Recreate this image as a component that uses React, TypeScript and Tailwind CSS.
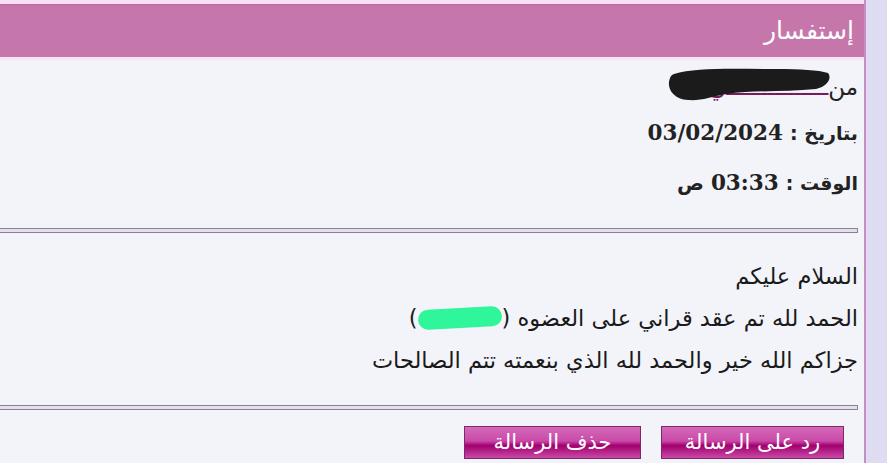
import React from 'react'

const arabic = { fontFamily: '"DejaVu Sans", "Noto Sans", sans-serif' }

const Rule: React.FC = () => (
  <div className="h-[5px] w-[858px] border-y border-r border-[#8a7f98] bg-[#e4e0ea]" />
)

const PinkButton: React.FC<{ label: string; width: string }> = ({ label, width }) => (
  <button
    className={`${width} h-[33px] border border-[#7a2a68] text-white text-[21px] leading-none bg-[linear-gradient(to_bottom,#d46ab8_0%,#c94aa8_45%,#a2006e_60%,#c84aa6_100%)]`}
    style={arabic}
  >
    {label}
  </button>
)

export default function App() {
  return (
    <div className="flex h-[463px] w-[887px] bg-[#dedcf1] overflow-hidden" style={arabic}>
      <div className="flex w-[866px] flex-col border-r-2 border-[#c58ec4] bg-[#f3f4fa]">
        {/* header */}
        <div className="h-[4px] bg-[#f8e1f2]" />
        <div dir="rtl" className="flex h-[53px] items-center bg-[#c576aa] pr-[10px] border-t border-[#b86a9c]">
          <span className="text-[25px] text-white">إستفسار</span>
        </div>
        <div className="h-[3px] bg-[#f8e4f4]" />

        {/* info */}
        <div dir="rtl" className="flex flex-col pr-[6px] pt-[12px] text-[23px] text-[#222]">
          <div className="flex h-[30px] items-center">
            <span>من</span>
            <span className="relative inline-block w-[160px] text-[#7a1a5c]">
              <span>ـــــــــــــــي</span>
              <svg className="absolute left-[-2px] top-[-6px]" width="166" height="40" viewBox="0 0 166 40">
                <path
                  d="M8 10 C30 3 70 5 110 5 C135 5 152 6 162 9 C166 14 162 22 150 25 C120 28 90 26 60 30 C45 33 35 37 22 36 C8 35 2 26 3 18 C4 13 5 11 8 10 Z"
                  fill="#1b1b1b"
                />
              </svg>
            </span>
          </div>
          <div className="mt-[16px] flex h-[30px] items-center font-bold">
            <span className="text-[19px]">بتاريخ :</span>
            <span className="mr-[7px] text-[21.5px]" style={{ fontFamily: '"DejaVu Serif", serif' }}>03/02/2024</span>
          </div>
          <div className="mt-[20px] flex h-[30px] items-center font-bold">
            <span className="text-[19px]">الوقت :</span>
            <span className="mx-[7px] text-[21.5px]" style={{ fontFamily: '"DejaVu Serif", serif' }}>03:33</span>
            <span className="text-[20px]">ص</span>
          </div>
        </div>

        <div className="mt-[30px]">
          <Rule />
        </div>

        {/* message */}
        <div dir="rtl" className="flex flex-col pr-[6px] pt-[22px] text-[22.5px] leading-[42px] text-[#1a1a1a]">
          <div>السلام عليكم</div>
          <div className="flex items-center">
            <span>الحمد لله تم عقد قراني على العضوه (</span>
            <span className="inline-block h-[20px] w-[84px] -rotate-3 rounded-full bg-[#2ff59b]" />
            <span>)</span>
          </div>
          <div>جزاكم الله خير والحمد لله الذي بنعمته تتم الصالحات</div>
        </div>

        <div className="mt-[24px]">
          <Rule />
        </div>

        {/* actions */}
        <div dir="rtl" className="flex gap-[20px] pr-[20px] pt-[16px]">
          <PinkButton label="رد على الرسالة" width="w-[183px]" />
          <PinkButton label="حذف الرسالة" width="w-[177px]" />
        </div>
      </div>
    </div>
  )
}
